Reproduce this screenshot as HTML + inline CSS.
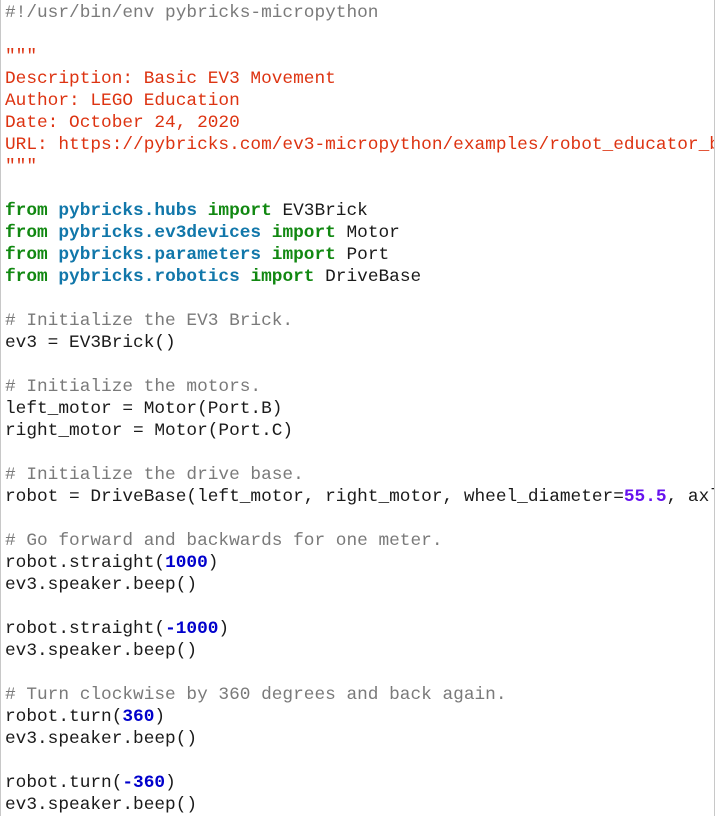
<!DOCTYPE html>
<html><head><meta charset="utf-8"><style>
html,body{margin:0;padding:0;background:#fff;width:716px;height:816px;overflow:hidden}
.box{position:absolute;left:0;top:0;width:713px;height:816px;border-left:1px solid #c8c8c8;border-right:1px solid #c8c8c8;overflow:hidden}
pre{margin:0;padding:2px 0 0 4px;font-family:"Liberation Mono",monospace;font-size:17.8px;line-height:22px;color:#1a1a1a;white-space:pre}
.c{color:#7a7a7a}.s{color:#dd3311}.k{color:#118811;font-weight:bold}.m{color:#1177aa;font-weight:bold}.n{color:#0000cc;font-weight:bold}.p{color:#6611ee;font-weight:bold}
</style></head><body><div class="box"><pre><span class="c">#!/usr/bin/env pybricks-micropython</span>

<span class="s">"""
Description: Basic EV3 Movement
Author: LEGO Education
Date: October 24, 2020
URL: https://pybricks.com/ev3-micropython/examples/robot_educator_basic.html
"""</span>

<span class="k">from</span> <span class="m">pybricks.hubs</span> <span class="k">import</span> EV3Brick
<span class="k">from</span> <span class="m">pybricks.ev3devices</span> <span class="k">import</span> Motor
<span class="k">from</span> <span class="m">pybricks.parameters</span> <span class="k">import</span> Port
<span class="k">from</span> <span class="m">pybricks.robotics</span> <span class="k">import</span> DriveBase

<span class="c"># Initialize the EV3 Brick.</span>
ev3 = EV3Brick()

<span class="c"># Initialize the motors.</span>
left_motor = Motor(Port.B)
right_motor = Motor(Port.C)

<span class="c"># Initialize the drive base.</span>
robot = DriveBase(left_motor, right_motor, wheel_diameter=<span class="p">55.5</span>, axle_track=104)

<span class="c"># Go forward and backwards for one meter.</span>
robot.straight(<span class="n">1000</span>)
ev3.speaker.beep()

robot.straight(<span class="n">-1000</span>)
ev3.speaker.beep()

<span class="c"># Turn clockwise by 360 degrees and back again.</span>
robot.turn(<span class="n">360</span>)
ev3.speaker.beep()

robot.turn(<span class="n">-360</span>)
ev3.speaker.beep()
</pre></div></body></html>
